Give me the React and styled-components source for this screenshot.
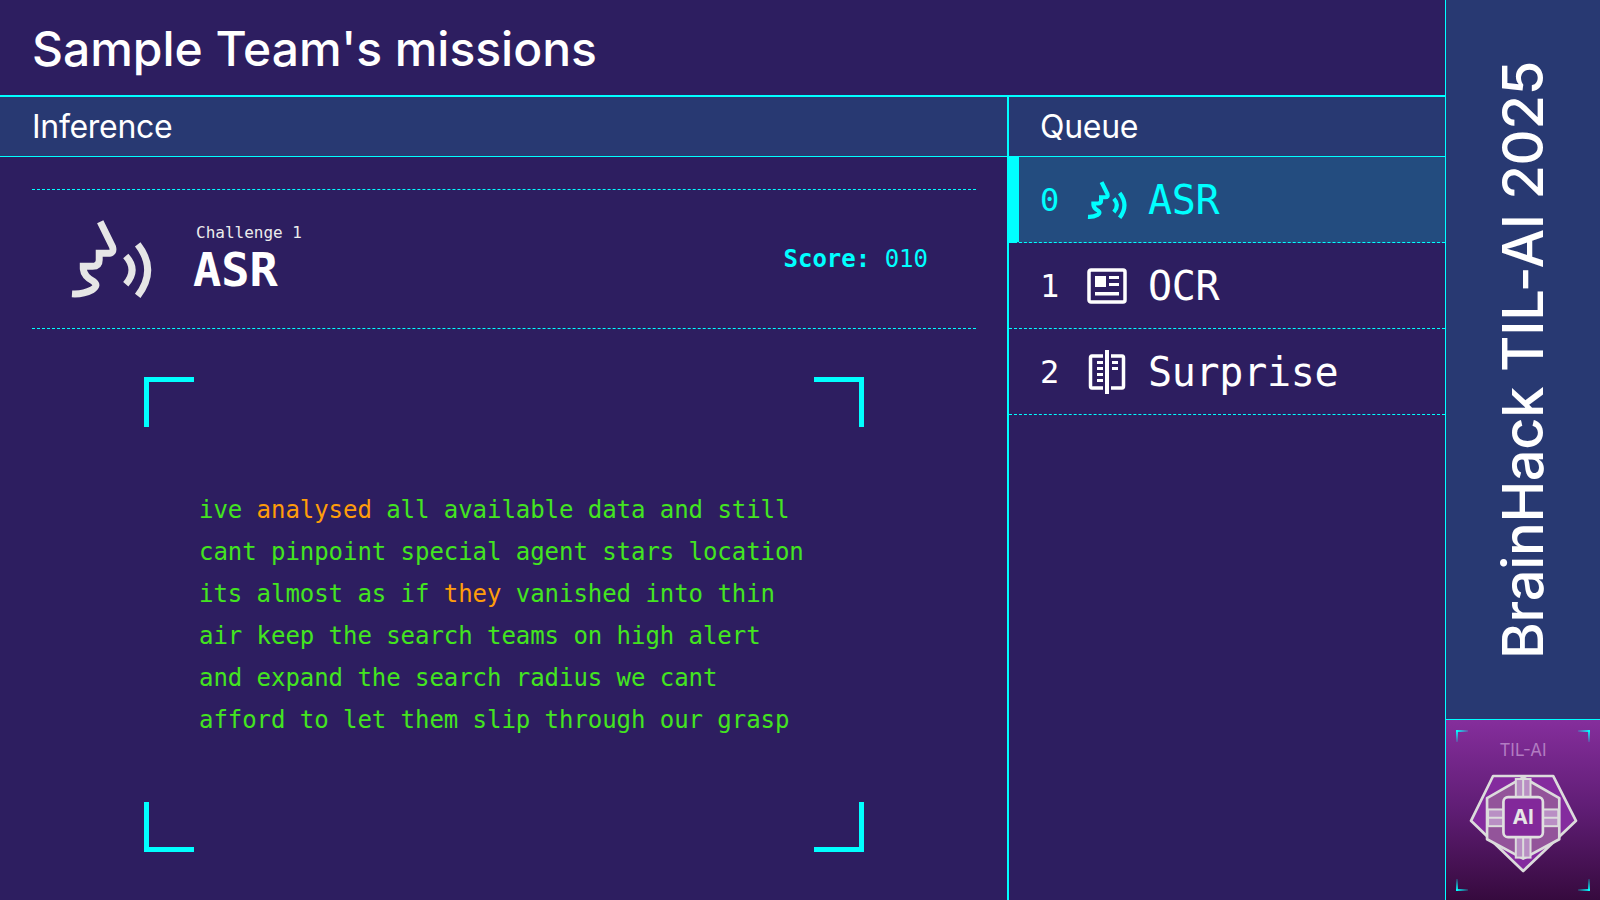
import React from "react";
import styled, { createGlobalStyle } from "styled-components";

const CYAN = "#00ffff";
const MONO = '"DejaVu Sans Mono", "Liberation Mono", monospace';
const SANS = 'Inter, "Liberation Sans", sans-serif';

const queue = [
  { id: 0, name: "ASR", Icon: SpeechIcon },
  { id: 1, name: "OCR", Icon: OcrIcon },
  { id: 2, name: "Surprise", Icon: BookIcon },
];

export default function App() {
  return (
    <Page>
      <GlobalStyle />
      <Main>
        <Title>Sample Team's missions</Title>
        <Columns>
          <Inference>
            <PanelHead>Inference</PanelHead>
            <InferenceBody>
              <Challenge>
                <BigIcon>
                  <SpeechIcon />
                </BigIcon>
                <ChallengeText>
                  <Small>Challenge 1</Small>
                  <Big>ASR</Big>
                </ChallengeText>
                <Score>
                  <b>Score:</b> 010
                </Score>
              </Challenge>
              <Frame>
                <Corner $top $left />
                <Corner $top $right />
                <Corner $bottom $left />
                <Corner $bottom $right />
                <Transcript>
                  ive <Wrong>analysed</Wrong> all available data and still cant
                  pinpoint special agent stars location its almost as if{" "}
                  <Wrong>they</Wrong> vanished into thin air keep the search
                  teams on high alert and expand the search radius we cant
                  afford to let them slip through our grasp
                </Transcript>
              </Frame>
            </InferenceBody>
          </Inference>
          <Queue>
            <PanelHead>Queue</PanelHead>
            {queue.map(({ id, name, Icon }) => (
              <QueueRow key={id} $active={id === 0}>
                <QueueNum>{id}</QueueNum>
                <QueueIcon>
                  <Icon weight={26} />
                </QueueIcon>
                <QueueName>{name}</QueueName>
              </QueueRow>
            ))}
          </Queue>
        </Columns>
      </Main>
      <Rail>
        <RailTitle>
          <RailText>BrainHack TIL-AI 2025</RailText>
        </RailTitle>
        <LogoPanel>
          <Tick $top $left />
          <Tick $top $right />
          <Tick $bottom $left />
          <Tick $bottom $right />
          <LogoLabel>TIL-AI</LogoLabel>
          <Logo />
        </LogoPanel>
      </Rail>
    </Page>
  );
}

function SpeechIcon({ weight = 21 }) {
  return (
    <svg viewBox="120 120 250 240" width="100%" height="100%" fill="none" stroke="currentColor" strokeWidth={weight}>
      <path d="M211 128 L248 203 Q254 223 234 223 H208 V243 Q208 262 188 262 H160 V270 Q162 292 190 307 Q208 320 186 333 Q160 347 126 345" />
      <path d="M288 231 Q326 273 288 316" />
      <path d="M324 196 Q384 273 324 351" />
    </svg>
  );
}

function OcrIcon() {
  return (
    <svg viewBox="0 0 40 36" width="100%" height="100%" fill="currentColor">
      <rect x="2" y="2" width="36" height="32" rx="2" fill="none" stroke="currentColor" strokeWidth="3.5" />
      <rect x="8" y="8" width="11" height="11" />
      <rect x="22" y="8" width="10" height="3" />
      <rect x="22" y="15" width="10" height="3" />
      <rect x="8" y="24" width="24" height="3.5" />
    </svg>
  );
}

function BookIcon() {
  return (
    <svg viewBox="0 0 36 44" width="100%" height="100%" fill="currentColor">
      <path d="M14 6 H3 Q1.5 6 1.5 8 V36 Q1.5 38 3 38 H14" fill="none" stroke="currentColor" strokeWidth="3.5" />
      <path d="M22 6 H33 Q34.5 6 34.5 8 V36 Q34.5 38 33 38 H22" fill="none" stroke="currentColor" strokeWidth="3.5" />
      <rect x="16" y="0" width="4" height="44" />
      <rect x="8" y="11" width="6" height="3" />
      <rect x="8" y="17" width="6" height="3" />
      <rect x="8" y="23" width="6" height="3" />
      <rect x="8" y="29" width="6" height="3" />
      <rect x="23" y="11" width="6" height="3" />
      <rect x="23" y="17" width="6" height="3" />
    </svg>
  );
}

function Logo() {
  return (
    <LogoSvg viewBox="88 190 326 296">
      <path d="M160 196 H340 L408 330 L250 480 L94 330 Z" fill="#842b9e" stroke="#dcdcdc" strokeWidth="8" strokeLinejoin="round" />
      <path d="M250 200 L358 262 V385 L250 443 L142 385 V262 Z" fill="#93549a" stroke="#dcdcdc" strokeWidth="8" strokeLinejoin="round" />
      <rect x="228" y="205" width="44" height="235" fill="#b98fc4" stroke="#dcdcdc" strokeWidth="6" />
      <rect x="145" y="296" width="210" height="50" fill="#b98fc4" stroke="#dcdcdc" strokeWidth="6" />
      <path d="M250 203 V258 M250 380 V442 M145 321 H190 M310 321 H355" stroke="#dcdcdc" strokeWidth="6" />
      <rect x="191" y="259" width="118" height="120" rx="14" fill="#82289a" stroke="#e0e0e0" strokeWidth="8" />
      <LogoText x="250" y="341" textAnchor="middle">AI</LogoText>
    </LogoSvg>
  );
}

const GlobalStyle = createGlobalStyle`
  html, body {
    margin: 0;
    padding: 0;
    background: #2d1e60;
  }
  * {
    box-sizing: border-box;
  }
`;

const Page = styled.div`
  width: 1600px;
  height: 900px;
  display: flex;
  overflow: hidden;
  background: #2d1e60;
  color: #fff;
`;

const Main = styled.div`
  flex: 1;
  min-width: 0;
  display: flex;
  flex-direction: column;
`;

const Title = styled.h1`
  height: 97px;
  margin: 0;
  padding: 1px 0 0 32px;
  display: flex;
  align-items: center;
  border-bottom: 2px solid ${CYAN};
  font-family: ${SANS};
  font-size: 48px;
  font-weight: 500;
  letter-spacing: -0.02px;
`;

const Columns = styled.div`
  flex: 1;
  min-height: 0;
  display: flex;
`;

const Inference = styled.section`
  width: 1009px;
  display: flex;
  flex-direction: column;
  border-right: 2px solid ${CYAN};
`;

const PanelHead = styled.div`
  height: 60px;
  padding-left: 32px;
  display: flex;
  align-items: center;
  background: #283972;
  border-bottom: 1px solid ${CYAN};
  font-family: ${SANS};
  font-size: 32px;
  letter-spacing: -0.3px;
`;

const InferenceBody = styled.div`
  flex: 1;
  min-height: 0;
  padding: 32px 31px 48px 32px;
  display: flex;
  flex-direction: column;
`;

const Challenge = styled.div`
  height: 140px;
  padding: 0 48px 0 38px;
  display: flex;
  align-items: center;
  border-top: 1px dashed ${CYAN};
  border-bottom: 1px dashed ${CYAN};
`;

const BigIcon = styled.div`
  width: 83px;
  height: 80px;
  color: #e6e6e6;
`;

const ChallengeText = styled.div`
  margin-left: 40px;
  font-family: ${MONO};
`;

const Small = styled.div`
  margin-left: 3px;
  font-size: 16px;
  line-height: 20px;
  color: #ececec;
`;

const Big = styled.div`
  font-size: 47px;
  line-height: 50px;
  font-weight: 700;
  padding-top: 2px;
`;

const Score = styled.div`
  margin-left: auto;
  font-family: ${MONO};
  font-size: 24px;
  color: ${CYAN};
`;

const Frame = styled.div`
  position: relative;
  flex: 1;
  margin: 48px 112px 0;
  display: flex;
  align-items: center;
  padding-left: 55px;
`;

const Corner = styled.span`
  position: absolute;
  width: 50px;
  height: 50px;
  ${(p) => (p.$top ? `top: 0; border-top: 5px solid ${CYAN};` : `bottom: 0; border-bottom: 5px solid ${CYAN};`)}
  ${(p) => (p.$left ? `left: 0; border-left: 5px solid ${CYAN};` : `right: 0; border-right: 5px solid ${CYAN};`)}
`;

const Transcript = styled.p`
  width: 612px;
  margin: 0;
  font-family: ${MONO};
  font-size: 24px;
  line-height: 42px;
  letter-spacing: -0.05px;
  color: #43e51f;
`;

const Wrong = styled.span`
  color: #ff9d0a;
`;

const Queue = styled.section`
  flex: 1;
  min-width: 0;
  & > div:first-child {
    padding-left: 31px;
  }
`;

const QueueRow = styled.div`
  height: 86px;
  padding-left: ${(p) => (p.$active ? "21px" : "31px")};
  display: flex;
  align-items: center;
  border-bottom: 1px dashed ${CYAN};
  border-left: ${(p) => (p.$active ? `10px solid ${CYAN}` : "0")};
  background: ${(p) => (p.$active ? "#234c7f" : "transparent")};
  color: ${(p) => (p.$active ? CYAN : "#fff")};
  font-family: ${MONO};
`;

const QueueNum = styled.span`
  width: 47px;
  font-size: 32px;
`;

const QueueIcon = styled.span`
  width: 40px;
  height: 44px;
  display: flex;
  justify-content: center;
  align-items: center;
  & > svg {
    max-height: 100%;
  }
`;

const QueueName = styled.span`
  margin-left: 21px;
  font-size: 40px;
  letter-spacing: -0.3px;
`;

const Rail = styled.aside`
  width: 155px;
  display: flex;
  flex-direction: column;
  border-left: 1px solid ${CYAN};
  background: #283972;
`;

const RailTitle = styled.div`
  flex: 1;
  min-height: 0;
  display: flex;
  align-items: center;
  justify-content: center;
`;

const RailText = styled.div`
  writing-mode: vertical-rl;
  transform: rotate(180deg);
  white-space: nowrap;
  font-family: ${SANS};
  font-size: 56px;
  font-weight: 500;
  letter-spacing: -0.3px;
`;

const LogoPanel = styled.div`
  position: relative;
  height: 181px;
  padding-top: 20px;
  display: flex;
  flex-direction: column;
  align-items: center;
  border-top: 1px solid ${CYAN};
  background: linear-gradient(180deg, #852e9c 0%, #5f1d74 50%, #360a3e 100%);
`;

const Tick = styled.span`
  position: absolute;
  width: 12px;
  height: 12px;
  ${(p) => (p.$top ? "top: 10px;" : "bottom: 9px;")}
  ${(p) => (p.$left ? "left: 10px;" : "right: 10px;")}
  background:
    linear-gradient(${(p) => (p.$left ? "to right" : "to left")}, ${CYAN}, rgba(0, 255, 255, 0.15))
      ${(p) => (p.$top ? "top" : "bottom")} center / 100% 2px no-repeat,
    linear-gradient(${(p) => (p.$top ? "to bottom" : "to top")}, ${CYAN}, rgba(0, 255, 255, 0.15))
      ${(p) => (p.$left ? "left" : "right")} center / 2px 100% no-repeat;
`;

const LogoLabel = styled.div`
  font-family: ${SANS};
  font-size: 17px;
  line-height: 20px;
  color: #b27cc2;
`;

const LogoSvg = styled.svg`
  width: 109px;
  height: 99px;
  margin-top: 14px;
`;

const LogoText = styled.text`
  font-family: ${SANS};
  font-size: 62px;
  font-weight: 700;
  fill: #e6e6e6;
`;
